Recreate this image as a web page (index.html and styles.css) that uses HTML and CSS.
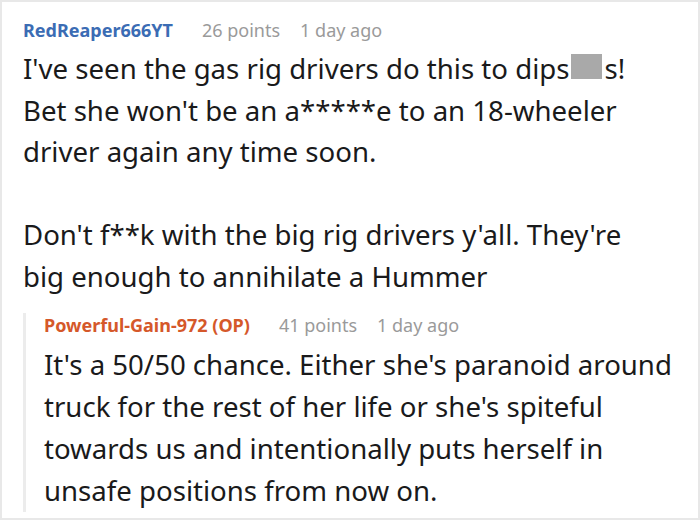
FILE: index.html
```html
<!DOCTYPE html>
<html lang="en">
<head>
    <meta charset="UTF-8">
    <title>Comment thread</title>
    <link rel="stylesheet" href="styles.css">
</head>
<body>

    <!-- Comentario principal -->
    <div class="thread">
        <div class="comment">
            <div class="meta">
                <span class="author">RedReaper666YT</span>
                <span class="points">26 points</span>
                <span class="time">1 day ago</span>
            </div>
            <div class="body">
                <p>I've seen the gas rig drivers do this to dips<span class="censor"></span>s!<br>Bet she won't be an a*****e to an 18-wheeler driver again any time soon.</p>
                <p>Don't f**k with the big rig drivers y'all. They're<br>big enough to annihilate a Hummer</p>
            </div>

            <!-- Respuesta -->
            <div class="reply">
                <div class="meta">
                    <span class="author op">Powerful-Gain-972 (OP)</span>
                    <span class="points">41 points</span>
                    <span class="time">1 day ago</span>
                </div>
                <div class="body">
                    <p>It's a 50/50 chance. Either she's paranoid around truck for the rest of her life or she's spiteful towards us and intentionally puts herself in unsafe positions from now on.</p>
                </div>
            </div>
        </div>
    </div>

</body>
</html>
```

FILE: styles.css
```css
body {
    margin: 0;
    padding: 0;
    background-color: white;
    font-family: "Noto Sans", sans-serif;
    color: #1a1a1b;
}

.thread {
    box-sizing: border-box;
    width: 700px;
    height: 520px;
    border: 2px solid #e8e8e8;
    overflow: hidden;
}

.comment {
    padding: 16px 20px 0 21px;
}

.meta {
    font-size: 18px;
    line-height: 24px;
    display: flex;
    gap: 20px;
}

.author {
    font-weight: bold;
    color: #3b6cb4;
    margin-right: 9px;
}

.author.op {
    color: #d5582a;
}

.points,
.time {
    color: #9a9a9a;
}

.body {
    margin-top: 6px;
    font-size: 27.6px;
    line-height: 41.6px;
}

.body p {
    margin: 0 0 41.6px 0;
}

.body p:last-child {
    margin-bottom: 0;
}

.censor {
    display: inline-block;
    width: 31px;
    height: 25px;
    margin: 0 2px;
    background-color: #a9a9a9;
}

.reply {
    margin-top: 27px;
    border-left: 3px solid #ececec;
    padding-left: 18px;
}

.reply .meta {
    margin-top: -12px;
}

.reply .body {
    line-height: 42.3px;
    margin-bottom: -9px;
}
```
